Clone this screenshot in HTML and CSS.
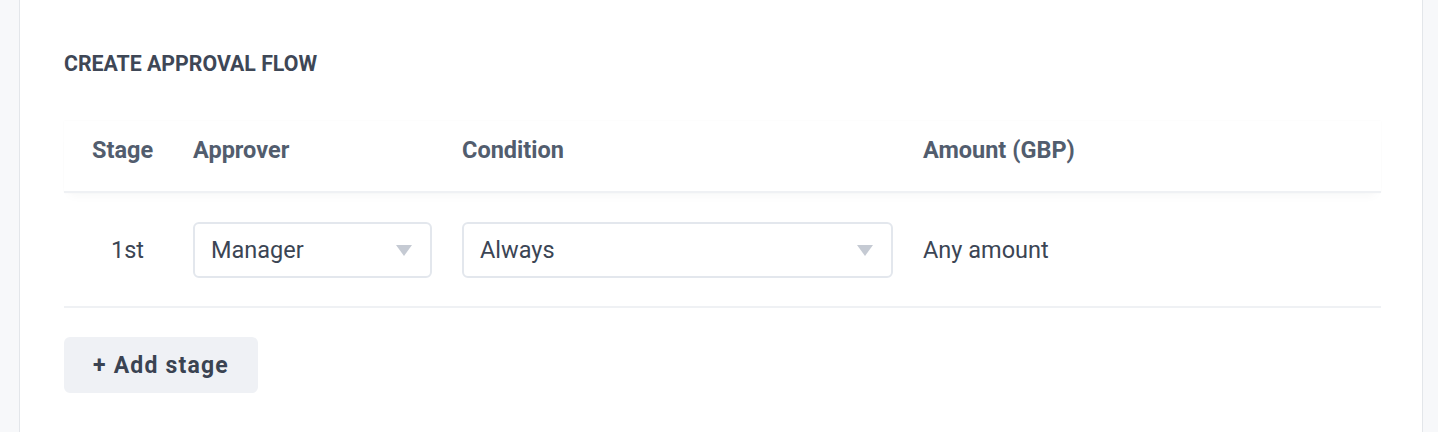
FILE: index.html
```html
<!DOCTYPE html>
<html lang="en">
<head>
    <meta charset="UTF-8">
    <title>Create approval flow</title>
    <meta name="viewport" content="width=device-width,initial-scale=1">
    <link rel="stylesheet" href="styles.css">
</head>
<body>
    <div class="page">
        <div class="card">
            <h2 class="title">Create approval flow</h2>
            <div class="flow">
                <div class="row head">
                    <div class="cell">Stage</div>
                    <div class="cell">Approver</div>
                    <div class="cell">Condition</div>
                    <div class="cell">Amount (GBP)</div>
                </div>
                <div class="row stage">
                    <div class="cell num">1st</div>
                    <div class="cell">
                        <div class="select">
                            <span>Manager</span>
                            <i class="arrow"></i>
                        </div>
                    </div>
                    <div class="cell">
                        <div class="select">
                            <span>Always</span>
                            <i class="arrow"></i>
                        </div>
                    </div>
                    <div class="cell">Any amount</div>
                </div>
            </div>
            <button class="add" type="button">+ Add stage</button>
        </div>
    </div>
</body>
</html>
```

FILE: styles.css
```css
html,body{
    height:100%;
}
body{
    margin:0;
    background:#f7f8fa;
    font-family:Roboto,"Liberation Sans",Arial,sans-serif;
    color:#3b4554;
}
.page{
    display:flex;
    min-height:100%;
    padding:0 15px 0 19px;
}
.card{
    flex:1;
    background:#fff;
    border-left:1px solid #e3e6ea;
    border-right:1px solid #e3e6ea;
    padding:52px 41px 0 44px;
}
.title{
    margin:0;
    font-size:21.3px;
    line-height:24px;
    font-weight:700;
    text-transform:uppercase;
    color:#3e4756;
}
.flow{
    margin-top:45px;
}
.row{
    display:grid;
    grid-template-columns:71px 239px 431px 1fr;
    column-gap:30px;
    align-items:center;
    padding-left:28px;
    font-size:23.5px;
}
.head{
    height:58px;
    padding-bottom:12px;
    font-weight:700;
    color:#525d6e;
    border-bottom:2px solid #eff1f4;
    box-shadow:0 0 2px rgba(30,40,60,.03), 0 8px 10px -6px rgba(30,40,60,.04);
}
.stage{
    padding-top:29px;
    padding-bottom:28px;
    border-bottom:2px solid #eff1f4;
}
.num{
    text-align:center;
}
.select{
    display:flex;
    align-items:center;
    justify-content:space-between;
    height:52px;
    padding:0 18px 0 16px;
    border:2px solid #e3e7ed;
    border-radius:6px;
    background:#fff;
}
.arrow{
    width:0;
    height:0;
    border-left:8px solid transparent;
    border-right:8px solid transparent;
    border-top:11px solid #c5cad3;
}
.add{
    margin-top:29px;
    height:56px;
    padding:0 29px;
    border:0;
    border-radius:6px;
    background:#eff1f5;
    font-family:inherit;
    font-size:23px;
    font-weight:700;
    letter-spacing:1.2px;
    color:#3a4352;
}
```
